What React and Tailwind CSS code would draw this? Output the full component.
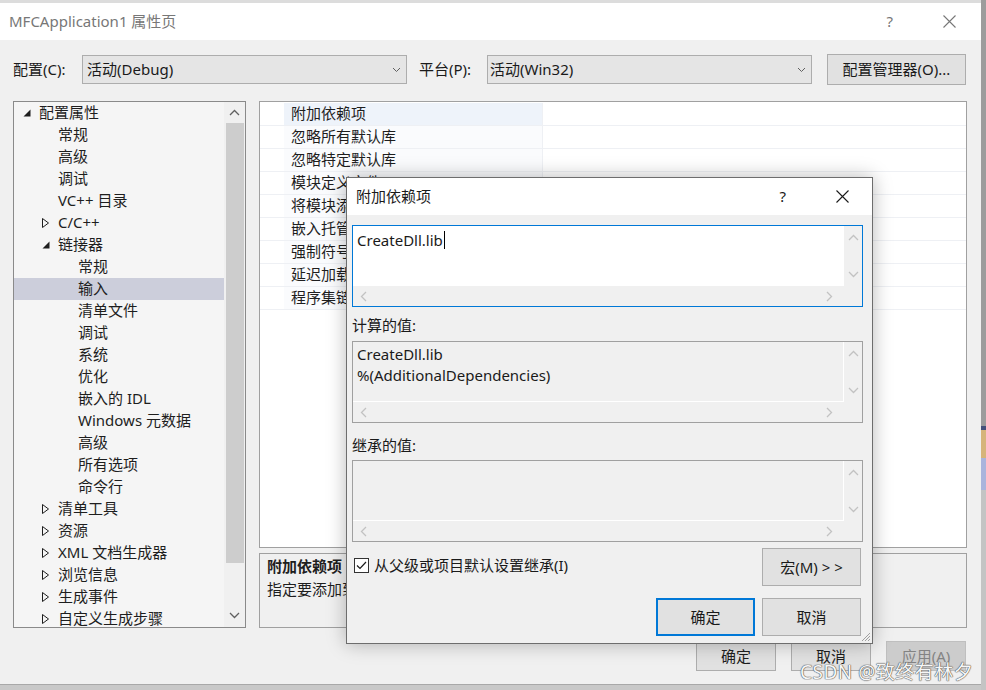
import React from 'react';

const FONT = "font-['Noto_Sans','Noto_Sans_CJK_SC',sans-serif]";

const Up = ({ c = '#c2c2c2' }) => (
  <svg width="11" height="7" viewBox="0 0 11 7">
    <polyline points="1,6 5.5,1.5 10,6" fill="none" stroke={c} strokeWidth="1.3" />
  </svg>
);
const Down = ({ c = '#c2c2c2' }) => (
  <svg width="11" height="7" viewBox="0 0 11 7">
    <polyline points="1,1 5.5,5.5 10,1" fill="none" stroke={c} strokeWidth="1.3" />
  </svg>
);
const Left = ({ c = '#c2c2c2' }) => (
  <svg width="7" height="11" viewBox="0 0 7 11">
    <polyline points="6,1 1.5,5.5 6,10" fill="none" stroke={c} strokeWidth="1.3" />
  </svg>
);
const Right = ({ c = '#c2c2c2' }) => (
  <svg width="7" height="11" viewBox="0 0 7 11">
    <polyline points="1,1 5.5,5.5 1,10" fill="none" stroke={c} strokeWidth="1.3" />
  </svg>
);

const Close = ({ c = '#555' }) => (
  <svg width="13" height="13" viewBox="0 0 13 13">
    <path d="M0.5 0.5 L12.5 12.5 M12.5 0.5 L0.5 12.5" stroke={c} strokeWidth="1.1" />
  </svg>
);

const Open = () => (
  <svg width="8" height="8" viewBox="0 0 8 8">
    <polygon points="7.5,0.5 7.5,7.5 0.5,7.5" fill="#1e1e1e" />
  </svg>
);
const Closed = () => (
  <svg width="7" height="10" viewBox="0 0 7 10">
    <polygon points="0.5,0.5 6.5,5 0.5,9.5" fill="none" stroke="#1e1e1e" strokeWidth="1" />
  </svg>
);

const pad = { 0: 'pl-[9px]', 1: 'pl-[28px]', 2: 'pl-[48px]' };

const tree = [
  [0, 'open', '配置属性'],
  [1, null, '常规'],
  [1, null, '高级'],
  [1, null, '调试'],
  [1, null, 'VC++ 目录'],
  [1, 'closed', 'C/C++'],
  [1, 'open', '链接器'],
  [2, null, '常规'],
  [2, null, '输入', true],
  [2, null, '清单文件'],
  [2, null, '调试'],
  [2, null, '系统'],
  [2, null, '优化'],
  [2, null, '嵌入的 IDL'],
  [2, null, 'Windows 元数据'],
  [2, null, '高级'],
  [2, null, '所有选项'],
  [2, null, '命令行'],
  [1, 'closed', '清单工具'],
  [1, 'closed', '资源'],
  [1, 'closed', 'XML 文档生成器'],
  [1, 'closed', '浏览信息'],
  [1, 'closed', '生成事件'],
  [1, 'closed', '自定义生成步骤'],
];

const props = [
  '附加依赖项',
  '忽略所有默认库',
  '忽略特定默认库',
  '模块定义文件',
  '将模块添加到程序集',
  '嵌入托管资源文件',
  '强制符号引用',
  '延迟加载的 DLL',
  '程序集链接资源',
];

const ScrollBox = ({ focused, children }) => (
  <div
    className={`flex h-[82px] w-[511px] flex-col border bg-[#f0f0f0] ${
      focused ? 'border-[#0078d7]' : 'border-[#a0a0a0]'
    }`}
  >
    <div className="flex h-[60px]">
      <div
        className={`flex-1 px-[4px] pt-[2px] text-[15px] leading-[21px] text-[#1a1a1a] ${
          focused ? 'bg-white' : 'border-r border-b border-white'
        }`}
      >
        {children}
      </div>
      <div className="flex w-[18px] flex-col items-center justify-between py-[8px]">
        <Up />
        <Down />
      </div>
    </div>
    <div className="flex flex-1 items-center justify-between pl-[7px] pr-[29px]">
      <Left />
      <Right />
    </div>
  </div>
);

export default function App() {
  return (
    <div className={`relative flex h-[690px] w-[986px] overflow-hidden bg-[#c8c8c8] ${FONT}`}>
      <div className="flex w-[981px] flex-col">
        <div className="h-[3px] bg-[#dcdcdc]" />
        <div className="flex h-[682px] flex-col border-b border-[#a8a8a8] bg-[#f0f0f0]">
          {/* title bar */}
          <div className="flex h-[37px] items-center bg-white pl-[9px] text-[15px] text-[#777]">
            <span className="flex-1">MFCApplication1 属性页</span>
            <span className="mr-[50px] text-[15px]">?</span>
            <span className="mr-[25px]">
              <Close c="#777" />
            </span>
          </div>

          {/* config row */}
          <div className="mt-[14px] flex h-[31px] items-center pl-[13px] text-[15px] text-[#1a1a1a]">
            <span className="w-[69px]">配置(C):</span>
            <div className="flex h-[29px] w-[325px] items-center justify-between border border-[#adadad] bg-[#e5e5e5] pl-[4px] pr-[5px]">
              <span>活动(Debug)</span>
              <svg width="9" height="6" viewBox="0 0 9 6">
                <polyline points="1,1 4.5,4.5 8,1" fill="none" stroke="#606060" strokeWidth="1" />
              </svg>
            </div>
            <span className="ml-[12px] w-[68px]">平台(P):</span>
            <div className="flex h-[29px] w-[325px] items-center justify-between border border-[#adadad] bg-[#e5e5e5] pl-[2px] pr-[5px]">
              <span>活动(Win32)</span>
              <svg width="9" height="6" viewBox="0 0 9 6">
                <polyline points="1,1 4.5,4.5 8,1" fill="none" stroke="#606060" strokeWidth="1" />
              </svg>
            </div>
            <div className="ml-[15px] flex h-[31px] w-[139px] items-center justify-center border border-[#adadad] bg-[#e1e1e1]">
              配置管理器(O)...
            </div>
          </div>

          {/* content */}
          <div className="mt-[16px] flex h-[527px] pl-[13px]">
            {/* tree */}
            <div className="flex h-[527px] w-[233px] border border-[#8a8a8a] bg-[#f5f5f5]">
              <div className="flex-1 overflow-hidden text-[15px] text-[#1e1e1e]">
                {tree.map(([lvl, tri, label, sel], i) => (
                  <div
                    key={i}
                    className={`flex h-[22px] items-center pb-[2px] leading-[20px] ${pad[lvl]} ${
                      sel ? 'bg-[#cccedb]' : ''
                    }`}
                  >
                    <span className="flex w-[16px] items-center pt-[1px]">
                      {tri === 'open' && <Open />}
                      {tri === 'closed' && <Closed />}
                    </span>
                    <span className="whitespace-nowrap">{label}</span>
                  </div>
                ))}
              </div>
              <div className="flex w-[21px] flex-col items-center bg-[#f0f0f0]">
                <div className="flex h-[21px] items-center">
                  <Up c="#606060" />
                </div>
                <div className="h-[440px] w-[18px] bg-[#cdcdcd]" />
                <div className="flex-1" />
                <div className="flex h-[24px] items-center">
                  <Down c="#606060" />
                </div>
              </div>
            </div>

            {/* property grid + description */}
            <div className="ml-[13px] flex w-[708px] flex-col">
              <div className="h-[447px] border border-[#a0a0a0] bg-white pt-[1px]">
                {props.map((p, i) => (
                  <div key={i} className="flex h-[23px] border-b border-[#eef0f4]">
                    <div className="w-[24px]" />
                    <div
                      className={`w-[259px] border-r border-[#eef0f4] pl-[7px] text-[15px] leading-[21px] text-[#1e1e1e] ${
                        i === 0 ? 'bg-[#eef3fa]' : 'bg-[#fafbfd]'
                      }`}
                    >
                      {p}
                    </div>
                    <div className="flex-1" />
                  </div>
                ))}
              </div>
              <div className="mt-[5px] h-[75px] border border-[#a0a0a0] bg-[#f0f0f0] pl-[7px] pt-[1px] text-[15px] leading-[23px] text-[#1e1e1e]">
                <div className="font-bold">附加依赖项</div>
                <div>指定要添加到链接命令行的附加项。</div>
              </div>
            </div>
          </div>

          {/* bottom buttons */}
          <div className="mt-[13px] flex h-[30px] justify-end gap-[15px] pr-[15px] text-[15px]">
            <div className="flex w-[80px] items-center justify-center border border-[#adadad] bg-[#e1e1e1] text-[#1e1e1e]">
              确定
            </div>
            <div className="flex w-[80px] items-center justify-center border border-[#adadad] bg-[#e1e1e1] text-[#1e1e1e]">
              取消
            </div>
            <div className="flex w-[80px] items-center justify-center border border-[#bfbfbf] bg-[#cccccc] text-[#838383]">
              应用(A)
            </div>
          </div>
        </div>
      </div>

      {/* right edge strip (background behind window) */}
      <div className="flex w-[5px] flex-col">
        <div className="h-[426px] bg-[#9c9c9c]" />
        <div className="h-[4px] bg-[#44507a]" />
        <div className="h-[28px] bg-[#d6b47a]" />
        <div className="h-[32px] bg-[#aab4dc]" />
        <div className="flex-1 bg-[#c4c4c4]" />
      </div>

      {/* modal dialog */}
      <div className="absolute left-[346px] top-[177px] flex h-[467px] w-[527px] flex-col border border-[#6d6d6d] bg-[#f0f0f0] shadow-[0_0_18px_rgba(0,0,0,0.28)]">
        <div className="flex h-[37px] items-center bg-white pl-[9px] text-[15px] text-[#1a1a1a]">
          <span className="flex-1">附加依赖项</span>
          <span className="mr-[50px]">?</span>
          <span className="mr-[23px]">
            <Close c="#1a1a1a" />
          </span>
        </div>
        <div className="flex flex-col pl-[5px] text-[15px] text-[#1a1a1a]">
          <div className="mt-[10px]">
            <ScrollBox focused>
              <span>CreateDll.lib</span>
              <span className="ml-[1px] inline-block h-[18px] w-[1px] translate-y-[3px] bg-black" />
            </ScrollBox>
          </div>
          <div className="mt-[8px] mb-[6px] h-[20px] leading-[20px]">计算的值:</div>
          <ScrollBox>
            <div>CreateDll.lib</div>
            <div>%(AdditionalDependencies)</div>
          </ScrollBox>
          <div className="mt-[12px] mb-[5px] h-[20px] leading-[20px]">继承的值:</div>
          <ScrollBox />
          <div className="mt-[6px] flex items-start justify-between pr-[11px]">
            <div className="mt-[6px] flex items-center pl-[2px]">
              <div className="flex h-[15px] w-[15px] items-center justify-center border border-[#333] bg-white">
                <svg width="11" height="9" viewBox="0 0 11 9">
                  <polyline points="1,4.5 4,7.5 10,1" fill="none" stroke="#1a1a1a" strokeWidth="1.2" />
                </svg>
              </div>
              <span className="ml-[5px]">从父级或项目默认设置继承(I)</span>
            </div>
            <div className="flex h-[38px] w-[99px] items-center justify-center border border-[#adadad] bg-[#e1e1e1]">
              宏(M) &gt; &gt;
            </div>
          </div>
          <div className="mt-[12px] flex justify-end gap-[7px] pr-[11px]">
            <div className="flex h-[38px] w-[99px] items-center justify-center border-2 border-[#0078d7] bg-[#e1e1e1]">
              确定
            </div>
            <div className="flex h-[38px] w-[99px] items-center justify-center border border-[#adadad] bg-[#e1e1e1]">
              取消
            </div>
          </div>
        </div>
        <svg className="absolute bottom-[1px] right-[1px]" width="12" height="12" viewBox="0 0 12 12">
          <path d="M11 3 L3 11 M11 6 L6 11 M11 9 L9 11" stroke="#a0a0a0" strokeWidth="1" />
        </svg>
      </div>

      {/* watermark */}
      <div className="absolute left-[800px] top-[660px] text-[19px] leading-[24px] tracking-[0.5px] text-[#f6f6f6] [text-shadow:0_0_1px_#555,0_0_1px_#555,0_0_1px_#555]">
        CSDN @致终有林夕
      </div>
    </div>
  );
}
